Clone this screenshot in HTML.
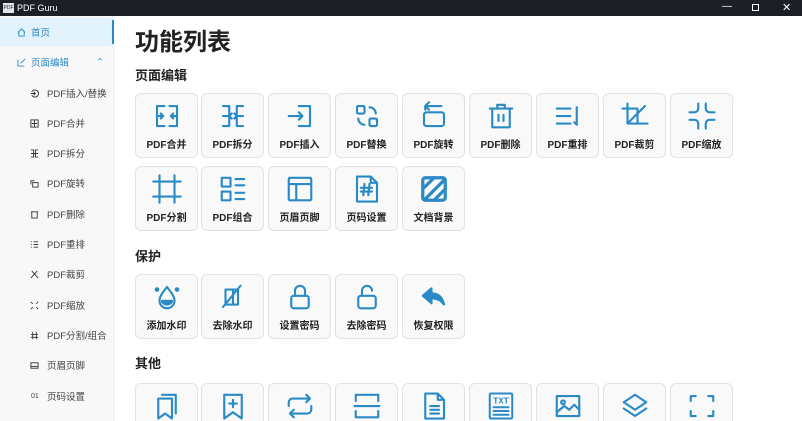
<!DOCTYPE html>
<html style="width:802px;height:421px;overflow:hidden"><head><meta charset="utf-8"><style>
*{margin:0;padding:0;box-sizing:border-box}
body{width:802px;height:421px;overflow:hidden;background:#fff;font-family:"Liberation Sans","Noto Sans CJK SC",sans-serif;position:relative}
.tb{position:absolute;left:0;top:0;width:802px;height:16px;background:#1c1f26;color:#fff;font-size:9px}
.side{position:absolute;left:0;top:16px;width:114px;height:405px;background:#f8f8f8;border-right:1px solid #ececec}
.si{position:absolute;left:0;width:114px;height:28px;font-size:9.5px;color:#444;display:flex;align-items:center}
.si svg{position:absolute;left:30px;width:9px;height:9px}
.si span{position:absolute;left:47px}
.h{position:absolute;left:135px;font-weight:bold;color:#222}
.c{position:absolute;width:63px;height:65px;background:#f9f9f9;border:1px solid #e2e2e2;border-radius:6px}
.c.l{height:38px;border-bottom:none;border-radius:6px 6px 0 0}
.c svg{position:absolute;left:16px;top:7px;width:30px;height:30px;fill:none;stroke:#2a8ac6;stroke-width:1.7;stroke-linecap:round;stroke-linejoin:round}
.c b{position:absolute;left:0;right:0;top:42px;text-align:center;font-size:10px;color:#222}
</style></head><body>
<div class="tb"><div style="position:absolute;left:3px;top:3px;width:11px;height:10px;background:#dfe6ee;color:#1c1f26;font-size:5px;line-height:10px;text-align:center">PDF</div><span style="position:absolute;left:17px;top:3px">PDF Guru</span>
<span style="position:absolute;left:722px;top:1px;font-size:10px">—</span><span style="position:absolute;left:752px;top:4px;width:7px;height:7px;border:1px solid #fff"></span><span style="position:absolute;left:782px;top:1px;font-size:11px">✕</span></div>
<div class="side">
<div class="si" style="top:2px;background:#e3f3fb;color:#2a8ac6"><svg style="left:17px" viewBox="0 0 10 10" fill="none" stroke="#2a8ac6"><path d="M1 5L5 1 9 5M2 4v5h6V4"/></svg><span style="left:31px">首页</span><i style="position:absolute;right:0;top:2px;width:2px;height:24px;background:#2a8ac6"></i></div>
<div class="si" style="top:32px;color:#2a8ac6"><svg style="left:17px" viewBox="0 0 10 10" fill="none" stroke="#2a8ac6"><path d="M1 2v7h7M4 6l5-5"/></svg><span style="left:31px">页面编辑</span><span style="left:96px">⌃</span></div>
<div class="si" style="top:63px"><svg viewBox="0 0 10 10" fill="none" stroke="#333"><path d="M2 3a4 4 0 1 1 0 4M1 5h5M4 3l2 2-2 2"/></svg><span>PDF插入/替换</span></div>
<div class="si" style="top:93px"><svg viewBox="0 0 10 10" fill="none" stroke="#333"><rect x="1" y="1" width="8" height="8"/><path d="M5 1v8M2 5h6"/></svg><span>PDF合并</span></div>
<div class="si" style="top:123px"><svg viewBox="0 0 10 10" fill="none" stroke="#333"><path d="M1 1h3v8H1M9 1H6v8h3M1 5h8"/></svg><span>PDF拆分</span></div>
<div class="si" style="top:153px"><svg viewBox="0 0 10 10" fill="none" stroke="#333"><rect x="3" y="4" width="6" height="5"/><path d="M1 6V2h4"/></svg><span>PDF旋转</span></div>
<div class="si" style="top:184px"><svg viewBox="0 0 10 10" fill="none" stroke="#333"><path d="M1 2h8M2 2v7h6V2"/></svg><span>PDF删除</span></div>
<div class="si" style="top:214px"><svg viewBox="0 0 10 10" fill="none" stroke="#333"><path d="M1 2h1M4 2h5M1 5h1M4 5h5M1 8h1M4 8h5"/></svg><span>PDF重排</span></div>
<div class="si" style="top:244px"><svg viewBox="0 0 10 10" fill="none" stroke="#333"><path d="M2 1l7 8M8 1L1 9"/></svg><span>PDF裁剪</span></div>
<div class="si" style="top:275px"><svg viewBox="0 0 10 10" fill="none" stroke="#333"><path d="M1 1l2 2M9 1L7 3M1 9l2-2M9 9L7 7"/></svg><span>PDF缩放</span></div>
<div class="si" style="top:305px"><svg viewBox="0 0 10 10" fill="none" stroke="#333"><path d="M3 1v8M7 1v8M1 4h8M1 7h8"/></svg><span>PDF分割/组合</span></div>
<div class="si" style="top:335px"><svg viewBox="0 0 10 10" fill="none" stroke="#333"><rect x="1" y="2" width="8" height="6"/><path d="M1 6h8"/></svg><span>页眉页脚</span></div>
<div class="si" style="top:366px"><span style="left:31px;font-size:7px">01</span><span>页码设置</span></div>
</div>
<div class="h" style="top:22px;font-size:24px">功能列表</div>
<div class="h" style="top:65px;font-size:13px">页面编辑</div>
<div class="h" style="top:246px;font-size:13px">保护</div>
<div class="h" style="top:353px;font-size:13px">其他</div>

<div class="c" style="left:135px;top:93px"><svg viewBox="0 0 24 24"><path d="M10 4H4v16h6M14 4h6v16h-6M4 12h5M20 12h-5M7 10l2 2-2 2M17 10l-2 2 2 2"/></svg><b>PDF合并</b></div>
<div class="c" style="left:201px;top:93px"><svg viewBox="0 0 24 24"><path d="M4 4h5v16H4M20 4h-5v16h5M4 12h5M15 12h5M11 10l-2 2 2 2M13 10l2 2-2 2"/></svg><b>PDF拆分</b></div>
<div class="c" style="left:268px;top:93px"><svg viewBox="0 0 24 24"><path d="M11 4h9v16h-9M3 12h11M11 9l3 3-3 3"/></svg><b>PDF插入</b></div>
<div class="c" style="left:335px;top:93px"><svg viewBox="0 0 24 24"><rect x="4" y="4" width="6" height="6" rx="1"/><rect x="14" y="14" width="6" height="6" rx="1"/><path d="M14 5a5 5 0 0 1 5 5M10 19a5 5 0 0 1-5-5"/></svg><b>PDF替换</b></div>
<div class="c" style="left:402px;top:93px"><svg viewBox="0 0 24 24"><rect x="4" y="9" width="16" height="11" rx="2"/><path d="M5 7V4h13M8 1L5 4l3 3"/></svg><b>PDF旋转</b></div>
<div class="c" style="left:469px;top:93px"><svg viewBox="0 0 24 24"><path d="M3 6h18M9 6V3h6v3M5 6v15h14V6M10 11v5M14 11v5"/></svg><b>PDF删除</b></div>
<div class="c" style="left:536px;top:93px"><svg viewBox="0 0 24 24"><path d="M3 6h11M3 12h11M3 18h11M19 5v14M17 17l2 2"/></svg><b>PDF重排</b></div>
<div class="c" style="left:603px;top:93px"><svg viewBox="0 0 24 24"><path d="M6 2v16h16M2 6h12v12M20 4L6 18"/></svg><b>PDF裁剪</b></div>
<div class="c" style="left:670px;top:93px"><svg viewBox="0 0 24 24"><path d="M9 2v4a3 3 0 0 1-3 3H2M15 2v4a3 3 0 0 0 3 3h4M9 22v-4a3 3 0 0 0-3-3H2M15 22v-4a3 3 0 0 1 3-3h4"/></svg><b>PDF缩放</b></div>

<div class="c" style="left:135px;top:166px"><svg viewBox="0 0 24 24"><path d="M6 1v22M18 1v22M1 6h22M1 18h22"/></svg><b>PDF分割</b></div>
<div class="c" style="left:201px;top:166px"><svg viewBox="0 0 24 24"><rect x="3" y="3" width="7" height="7"/><rect x="3" y="14" width="7" height="7"/><path d="M14 4h7M14 9h7M14 15h7M14 20h7"/></svg><b>PDF组合</b></div>
<div class="c" style="left:268px;top:166px"><svg viewBox="0 0 24 24"><rect x="3" y="3" width="18" height="18" rx="1"/><path d="M3 8h18M9 8v13"/></svg><b>页眉页脚</b></div>
<div class="c" style="left:335px;top:166px"><svg viewBox="0 0 24 24"><path d="M4 2h11l5 5v15H4zM15 2v5h5M10 8l-1 9M14 8l-1 9M7 11h9M7 14h9"/></svg><b>页码设置</b></div>
<div class="c" style="left:402px;top:166px"><svg viewBox="0 0 24 24" style="stroke-width:2.6"><rect x="3" y="3" width="18" height="18" rx="2"/><path d="M3 12L12 3M5 20L20 5M12 21l9-9"/></svg><b>文档背景</b></div>

<div class="c" style="left:135px;top:274px"><svg viewBox="0 0 24 24"><path d="M12 4c4 5 6 8 6 11a6 6 0 0 1-12 0c0-3 2-6 6-11z"/><path d="M8 15a4 3 0 0 0 8 0z" fill="#2a8ac6"/><circle cx="4" cy="6" r="1" fill="#2a8ac6"/><circle cx="20" cy="6" r="1" fill="#2a8ac6"/></svg><b>添加水印</b></div>
<div class="c" style="left:201px;top:274px"><svg viewBox="0 0 24 24"><path d="M6 6h10v12H6zM4 20L18 3M12 6v12"/></svg><b>去除水印</b></div>
<div class="c" style="left:268px;top:274px"><svg viewBox="0 0 24 24"><rect x="5" y="11" width="14" height="10" rx="2"/><path d="M8 11V7a4 4 0 0 1 8 0v4"/></svg><b>设置密码</b></div>
<div class="c" style="left:335px;top:274px"><svg viewBox="0 0 24 24"><rect x="5" y="11" width="14" height="10" rx="2"/><path d="M8 11V7a4 4 0 0 1 8 0"/></svg><b>去除密码</b></div>
<div class="c" style="left:402px;top:274px"><svg viewBox="0 0 24 24"><path d="M10 5L3 11l7 6v-4c5 0 8 2 10 5-1-5-4-9-10-9z" fill="#2a8ac6"/></svg><b>恢复权限</b></div>

<div class="c l" style="left:135px;top:383px"><svg viewBox="0 0 24 24"><path d="M5 6h11v16l-5.5-4L5 22zM8 3h11v15"/></svg></div>
<div class="c l" style="left:201px;top:383px"><svg viewBox="0 0 24 24"><path d="M5 3h14v19l-7-5-7 5zM12 7v6M9 10h6"/></svg></div>
<div class="c l" style="left:268px;top:383px"><svg viewBox="0 0 24 24"><path d="M3 12V9a3 3 0 0 1 3-3h14M17 3l3 3-3 3M21 12v3a3 3 0 0 1-3 3H4M7 21l-3-3 3-3"/></svg></div>
<div class="c l" style="left:335px;top:383px"><svg viewBox="0 0 24 24"><path d="M3 8V3h18v5M3 16v5h18v-5M2 12h20"/></svg></div>
<div class="c l" style="left:402px;top:383px"><svg viewBox="0 0 24 24"><path d="M5 2h10l5 5v15H5zM15 2v5h5M9 12h7M9 15h7M9 18h7"/></svg></div>
<div class="c l" style="left:469px;top:383px"><svg viewBox="0 0 24 24" style="stroke-width:1.6"><rect x="3" y="2" width="18" height="20" rx="1"/><path d="M6 13h12M6 16h12M6 19h12"/><text x="12" y="10" text-anchor="middle" font-size="7" fill="#2a8ac6" stroke="none" font-weight="bold" font-family="Liberation Mono">TXT</text></svg></div>
<div class="c l" style="left:536px;top:383px"><svg viewBox="0 0 24 24"><rect x="3" y="4" width="18" height="16"/><circle cx="8" cy="9" r="1.5"/><path d="M3 17l6-5 4 3 4-4 4 4"/></svg></div>
<div class="c l" style="left:603px;top:383px"><svg viewBox="0 0 24 24"><path d="M12 3l9 6-9 6-9-6zM3 14l9 6 9-6"/></svg></div>
<div class="c l" style="left:670px;top:383px"><svg viewBox="0 0 24 24"><path d="M3 8V4h4M17 4h4v4M21 16v4h-4M7 20H3v-4"/></svg></div>
</body></html>
